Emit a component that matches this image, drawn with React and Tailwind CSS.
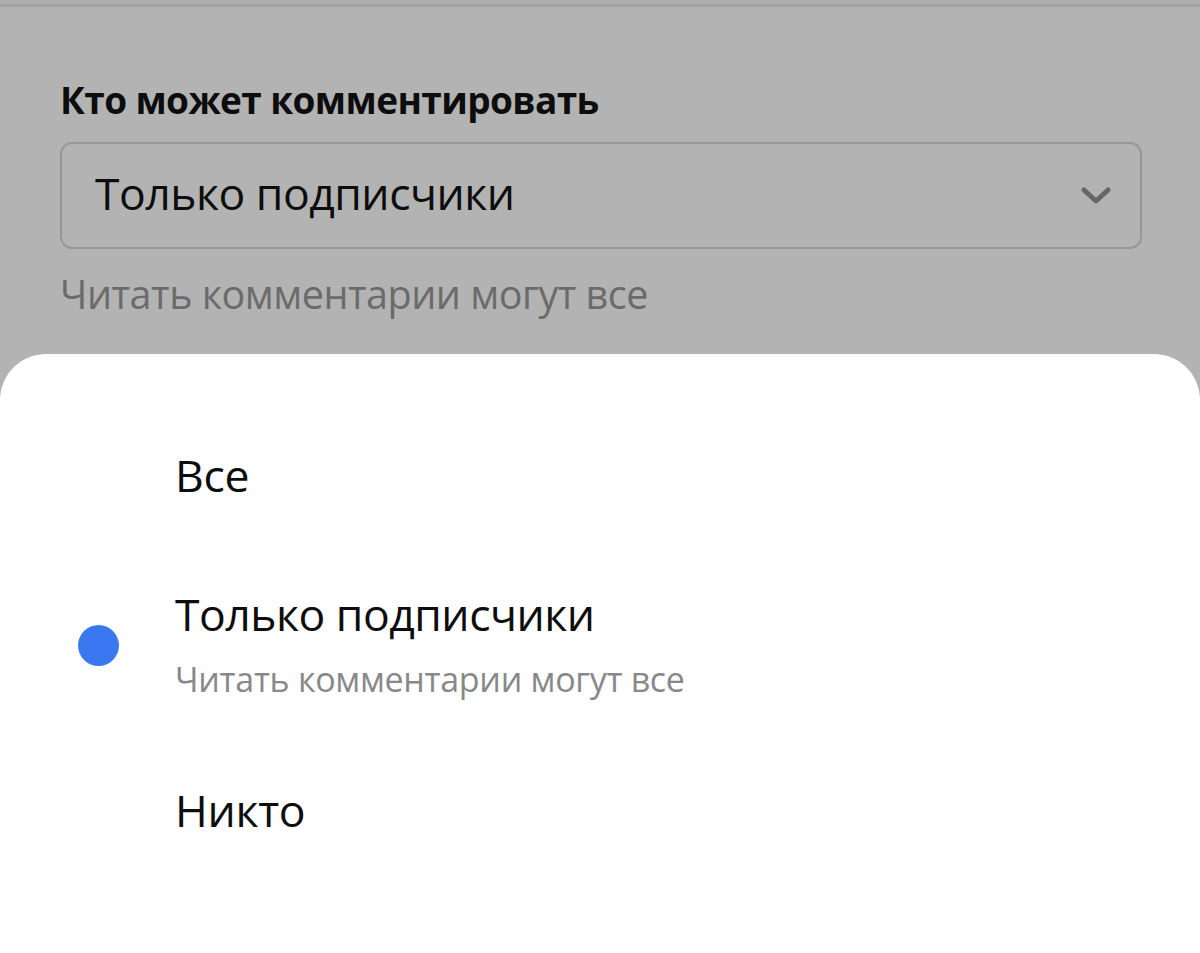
import React from "react";

const font = { fontFamily: '"Open Sans", "Noto Sans", sans-serif' };

export default function App() {
  return (
    <div className="w-[1200px] h-[953px] bg-[#b3b3b3] flex flex-col overflow-hidden" style={font}>
      <div className="h-[4px] shrink-0 bg-[#afafaf]" />
      <div className="h-[3px] shrink-0 bg-[#a3a3a3]" />
      <div className="px-[60px] pt-[71px] shrink-0">
        <div className="text-[37px] font-bold leading-[44px] text-[#0d0d0d] tracking-[-0.6px]">Кто может комментировать</div>
        <div className="mt-[20px] h-[107px] w-[1082px] rounded-[12px] border-2 border-[#989898] flex items-center justify-between pl-[33px] pr-[28px] pb-[5px]">
          <span className="text-[44.5px] leading-none text-[#0d0d0d] tracking-[-0.5px]">Только подписчики</span>
          <svg width="32" height="22" viewBox="0 0 32 22" className="mt-[5px]">
            <path d="M4 5 L16 16 L28 5" fill="none" stroke="#666" strokeWidth="5" strokeLinecap="round" strokeLinejoin="round" />
          </svg>
        </div>
        <div className="mt-[21px] text-[39.5px] leading-[48px] text-[#6b6b6b] tracking-[-0.5px]">Читать комментарии могут все</div>
      </div>
      <div className="mt-[36px] flex-1 bg-white rounded-t-[46px] pl-[175px] pt-[95px]">
        <div className="text-[44.5px] leading-[52px] text-[#0d0d0d] tracking-[-0.3px]">Все</div>
        <div className="mt-[87px] relative">
          <div className="absolute left-[-97px] top-[37px] w-[41px] h-[41px] rounded-full bg-[#3a78f2]" />
          <div className="text-[44.5px] leading-[52px] text-[#0d0d0d] tracking-[-0.5px]">Только подписчики</div>
          <div className="mt-[19px] text-[34px] leading-[40px] text-[#888888] tracking-[-0.3px]">Читать комментарии могут все</div>
        </div>
        <div className="mt-[85px] text-[44.5px] leading-[52px] text-[#0d0d0d] tracking-[-0.3px]">Никто</div>
      </div>
    </div>
  );
}
